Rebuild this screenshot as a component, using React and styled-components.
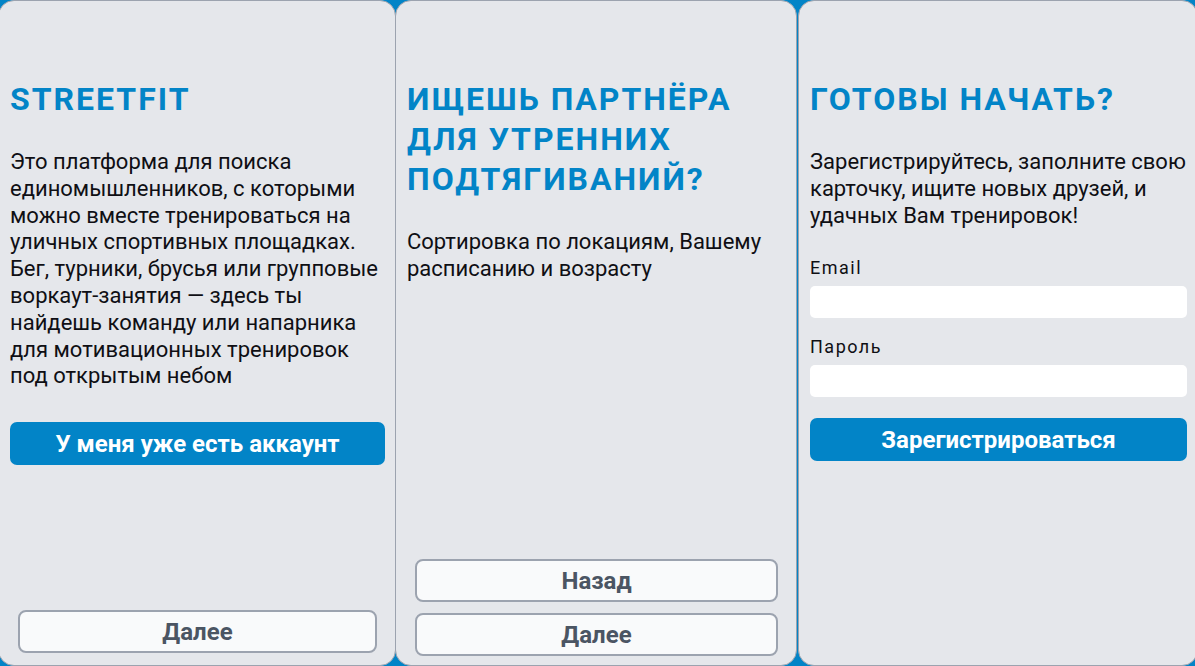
import React from 'react'
import styled, { createGlobalStyle } from 'styled-components'

const Colors = {
  brand: '#0284c7',
  card: '#e5e7eb',
  border: '#9ca3af',
  text: '#0f0f14',
  muted: '#4b5563',
  light: '#f9fafb',
}

const GlobalStyle = createGlobalStyle`
  html, body {
    margin: 0;
    padding: 0;
    height: 100%;
    overflow: hidden;
    background: ${Colors.brand};
    font-family: Roboto, "Liberation Sans", sans-serif;
  }
`

const Slider = styled.div`
  display: flex;
  height: 666px;
  margin-left: -2px;
`

const Card = styled.section`
  box-sizing: border-box;
  flex: 0 0 ${(p) => p.$width}px;
  margin-left: ${(p) => p.$offset || 0}px;
  height: 666px;
  display: flex;
  flex-direction: column;
  padding: 78px 10px ${(p) => p.$bottom || 11}px 11px;
  background: ${Colors.card};
  border: 1px solid ${Colors.border};
  border-radius: 16px;
`

const Title = styled.h2`
  margin: 0;
  color: ${Colors.brand};
  font-size: 32px;
  font-weight: 700;
  line-height: 40px;
  letter-spacing: 2px;
  text-transform: uppercase;
`

const Text = styled.p`
  margin: 30px 0 0;
  color: ${Colors.text};
  font-size: 22px;
  line-height: 26.8px;
  white-space: ${(p) => (p.$nowrap ? 'nowrap' : 'normal')};
`

const Primary = styled.button`
  box-sizing: border-box;
  width: 100%;
  height: 43px;
  margin-top: ${(p) => p.$top}px;
  border: none;
  border-radius: 7px;
  background: ${Colors.brand};
  color: #fff;
  font-family: inherit;
  font-size: 24px;
  font-weight: 700;
`

const Footer = styled.div`
  margin-top: auto;
  display: flex;
  flex-direction: column;
  gap: 11px;
  padding: 0 8px;
`

const Secondary = styled.button`
  box-sizing: border-box;
  width: 100%;
  height: 43px;
  border: 2px solid ${Colors.border};
  border-radius: 8px;
  background: ${Colors.light};
  color: ${Colors.muted};
  font-family: inherit;
  font-size: 24px;
  font-weight: 700;
`

const Form = styled.form`
  display: flex;
  flex-direction: column;
  margin-top: 28px;
`

const Label = styled.label`
  color: ${Colors.text};
  font-size: 18px;
  line-height: 22px;
  letter-spacing: 1.5px;
  margin-top: ${(p) => p.$top || 0}px;
`

const Input = styled.input`
  box-sizing: border-box;
  height: 32px;
  margin-top: 7px;
  border: none;
  border-radius: 5px;
  background: #fff;
  font-family: inherit;
  font-size: 16px;
`

export default function App() {
  return (
    <>
      <GlobalStyle />
      <Slider>
        <Card $width={398} $bottom={12}>
          <Title>Streetfit</Title>
          <Text>
            Это платформа для поиска единомышленников, с которыми можно вместе
            тренироваться на уличных спортивных площадках. Бег, турники, брусья
            или групповые воркаут-занятия — здесь ты найдешь команду или
            напарника для мотивационных тренировок под открытым небом
          </Text>
          <Primary $top={32}>У меня уже есть аккаунт</Primary>
          <Footer>
            <Secondary>Далее</Secondary>
          </Footer>
        </Card>
        <Card $width={402} $offset={-1} $bottom={9}>
          <Title>Ищешь партнёра для утренних подтягиваний?</Title>
          <Text>Сортировка по локациям, Вашему расписанию и возрасту</Text>
          <Footer>
            <Secondary>Назад</Secondary>
            <Secondary>Далее</Secondary>
          </Footer>
        </Card>
        <Card $width={400} $offset={1}>
          <Title>Готовы начать?</Title>
          <Text $nowrap>
            Зарегистрируйтесь, заполните свою
            <br />
            карточку, ищите новых друзей, и
            <br />
            удачных Вам тренировок!
          </Text>
          <Form onSubmit={(e) => e.preventDefault()}>
            <Label>Email</Label>
            <Input type="email" />
            <Label $top={18}>Пароль</Label>
            <Input type="password" />
            <Primary $top={21}>Зарегистрироваться</Primary>
          </Form>
        </Card>
      </Slider>
    </>
  )
}
